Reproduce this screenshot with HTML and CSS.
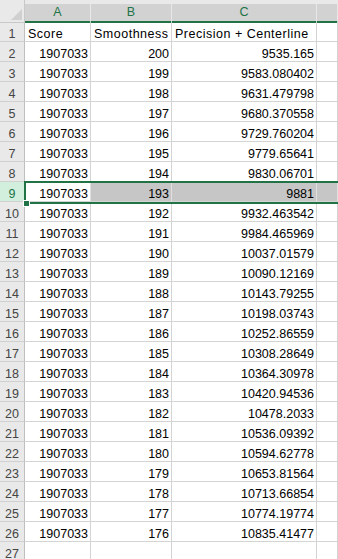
FILE: index.html
```html
<!DOCTYPE html>
<html lang="en">
<head>
  <meta charset="UTF-8" />
  <meta name="viewport" content="width=device-width, initial-scale=1.0"/>
  <title>Sheet1</title>
  <link rel="stylesheet" href="styles.css">
</head>
<body>
  <div class="sheet">
    <!-- Column headers -->
    <div class="row head-row">
      <div class="corner"><span class="corner-tri"></span></div>
      <div class="col-head">A</div>
      <div class="col-head">B</div>
      <div class="col-head">C</div>
      <div class="col-head"></div>
    </div>

    <div class="row"><div class="row-head">1</div><div class="cell text">Score</div><div class="cell text">Smoothness</div><div class="cell text">Precision + Centerline</div><div class="cell"></div></div>
    <div class="row"><div class="row-head">2</div><div class="cell">1907033</div><div class="cell">200</div><div class="cell">9535.165</div><div class="cell"></div></div>
    <div class="row"><div class="row-head">3</div><div class="cell">1907033</div><div class="cell">199</div><div class="cell">9583.080402</div><div class="cell"></div></div>
    <div class="row"><div class="row-head">4</div><div class="cell">1907033</div><div class="cell">198</div><div class="cell">9631.479798</div><div class="cell"></div></div>
    <div class="row"><div class="row-head">5</div><div class="cell">1907033</div><div class="cell">197</div><div class="cell">9680.370558</div><div class="cell"></div></div>
    <div class="row"><div class="row-head">6</div><div class="cell">1907033</div><div class="cell">196</div><div class="cell">9729.760204</div><div class="cell"></div></div>
    <div class="row"><div class="row-head">7</div><div class="cell">1907033</div><div class="cell">195</div><div class="cell">9779.65641</div><div class="cell"></div></div>
    <div class="row"><div class="row-head">8</div><div class="cell">1907033</div><div class="cell">194</div><div class="cell">9830.06701</div><div class="cell"></div></div>
    <div class="row selected"><div class="row-head">9</div><div class="cell active">1907033</div><div class="cell">193</div><div class="cell">9881</div><div class="cell"></div></div>
    <div class="row"><div class="row-head">10</div><div class="cell">1907033</div><div class="cell">192</div><div class="cell">9932.463542</div><div class="cell"></div></div>
    <div class="row"><div class="row-head">11</div><div class="cell">1907033</div><div class="cell">191</div><div class="cell">9984.465969</div><div class="cell"></div></div>
    <div class="row"><div class="row-head">12</div><div class="cell">1907033</div><div class="cell">190</div><div class="cell">10037.01579</div><div class="cell"></div></div>
    <div class="row"><div class="row-head">13</div><div class="cell">1907033</div><div class="cell">189</div><div class="cell">10090.12169</div><div class="cell"></div></div>
    <div class="row"><div class="row-head">14</div><div class="cell">1907033</div><div class="cell">188</div><div class="cell">10143.79255</div><div class="cell"></div></div>
    <div class="row"><div class="row-head">15</div><div class="cell">1907033</div><div class="cell">187</div><div class="cell">10198.03743</div><div class="cell"></div></div>
    <div class="row"><div class="row-head">16</div><div class="cell">1907033</div><div class="cell">186</div><div class="cell">10252.86559</div><div class="cell"></div></div>
    <div class="row"><div class="row-head">17</div><div class="cell">1907033</div><div class="cell">185</div><div class="cell">10308.28649</div><div class="cell"></div></div>
    <div class="row"><div class="row-head">18</div><div class="cell">1907033</div><div class="cell">184</div><div class="cell">10364.30978</div><div class="cell"></div></div>
    <div class="row"><div class="row-head">19</div><div class="cell">1907033</div><div class="cell">183</div><div class="cell">10420.94536</div><div class="cell"></div></div>
    <div class="row"><div class="row-head">20</div><div class="cell">1907033</div><div class="cell">182</div><div class="cell">10478.2033</div><div class="cell"></div></div>
    <div class="row"><div class="row-head">21</div><div class="cell">1907033</div><div class="cell">181</div><div class="cell">10536.09392</div><div class="cell"></div></div>
    <div class="row"><div class="row-head">22</div><div class="cell">1907033</div><div class="cell">180</div><div class="cell">10594.62778</div><div class="cell"></div></div>
    <div class="row"><div class="row-head">23</div><div class="cell">1907033</div><div class="cell">179</div><div class="cell">10653.81564</div><div class="cell"></div></div>
    <div class="row"><div class="row-head">24</div><div class="cell">1907033</div><div class="cell">178</div><div class="cell">10713.66854</div><div class="cell"></div></div>
    <div class="row"><div class="row-head">25</div><div class="cell">1907033</div><div class="cell">177</div><div class="cell">10774.19774</div><div class="cell"></div></div>
    <div class="row"><div class="row-head">26</div><div class="cell">1907033</div><div class="cell">176</div><div class="cell">10835.41477</div><div class="cell"></div></div>
    <div class="row"><div class="row-head">27</div><div class="cell"></div><div class="cell"></div><div class="cell"></div><div class="cell"></div></div>

    <!-- Selected row outline + fill handle -->
    <div class="selection"></div>
    <div class="fill-handle"></div>
  </div>
</body>
</html>
```

FILE: styles.css
```css
:root {
  --green: #217346;
  --grid: #d4d4d4;
  --head-bg: #e9e9e9;
}

body {
  margin: 0;
  background: #fff;
  font-family: "Liberation Sans", Arial, sans-serif;
  font-size: 12.5px;
  color: #000;
  overflow: hidden;
}

.sheet {
  position: relative;
}

.row {
  display: grid;
  grid-template-columns: 25px 66px 81px 145px 1fr;
  height: 20px;
}

.head-row {
  height: 22px;
  background: var(--head-bg);
}

.corner {
  position: relative;
  border-right: 1px solid #c8c8c8;
  border-bottom: 1px solid #c8c8c8;
  box-sizing: border-box;
}

.corner-tri {
  position: absolute;
  right: 2px;
  bottom: 2px;
  width: 0;
  height: 0;
  border-left: 11px solid transparent;
  border-bottom: 11px solid #d0d0d0;
}

.col-head {
  box-sizing: border-box;
  margin-top: 4px;
  background: #d2d2d2;
  border-right: 1px solid #e8e8e8;
  border-bottom: 2px solid var(--green);
  color: var(--green);
  text-align: center;
  line-height: 17px;
}

.row-head {
  box-sizing: border-box;
  background: var(--head-bg);
  border-right: 1px solid #bfbfbf;
  border-bottom: 1px solid #d0d0d0;
  color: #444;
  text-align: center;
  padding-top: 5px;
  line-height: 14px;
}

.cell {
  box-sizing: border-box;
  border-right: 1px solid var(--grid);
  border-bottom: 1px solid var(--grid);
  text-align: right;
  padding: 5px 2px 0 3px;
  line-height: 14px;
  white-space: nowrap;
  overflow: hidden;
}

.cell.text {
  text-align: left;
  letter-spacing: 0.5px;
}

.selected .row-head {
  background: #d2efdd;
  color: var(--green);
}

.selected .cell {
  background: #c6c6c6;
  border-right-color: #e0e0e0;
}

.selected .cell.active {
  background: #fff;
}

.selection {
  position: absolute;
  top: 181px;
  left: 24px;
  right: -2px;
  height: 23px;
  box-sizing: border-box;
  border: 2px solid var(--green);
}

.fill-handle {
  position: absolute;
  top: 200px;
  left: 23px;
  width: 5px;
  height: 5px;
  background: var(--green);
  border: 1px solid #fff;
}
```
